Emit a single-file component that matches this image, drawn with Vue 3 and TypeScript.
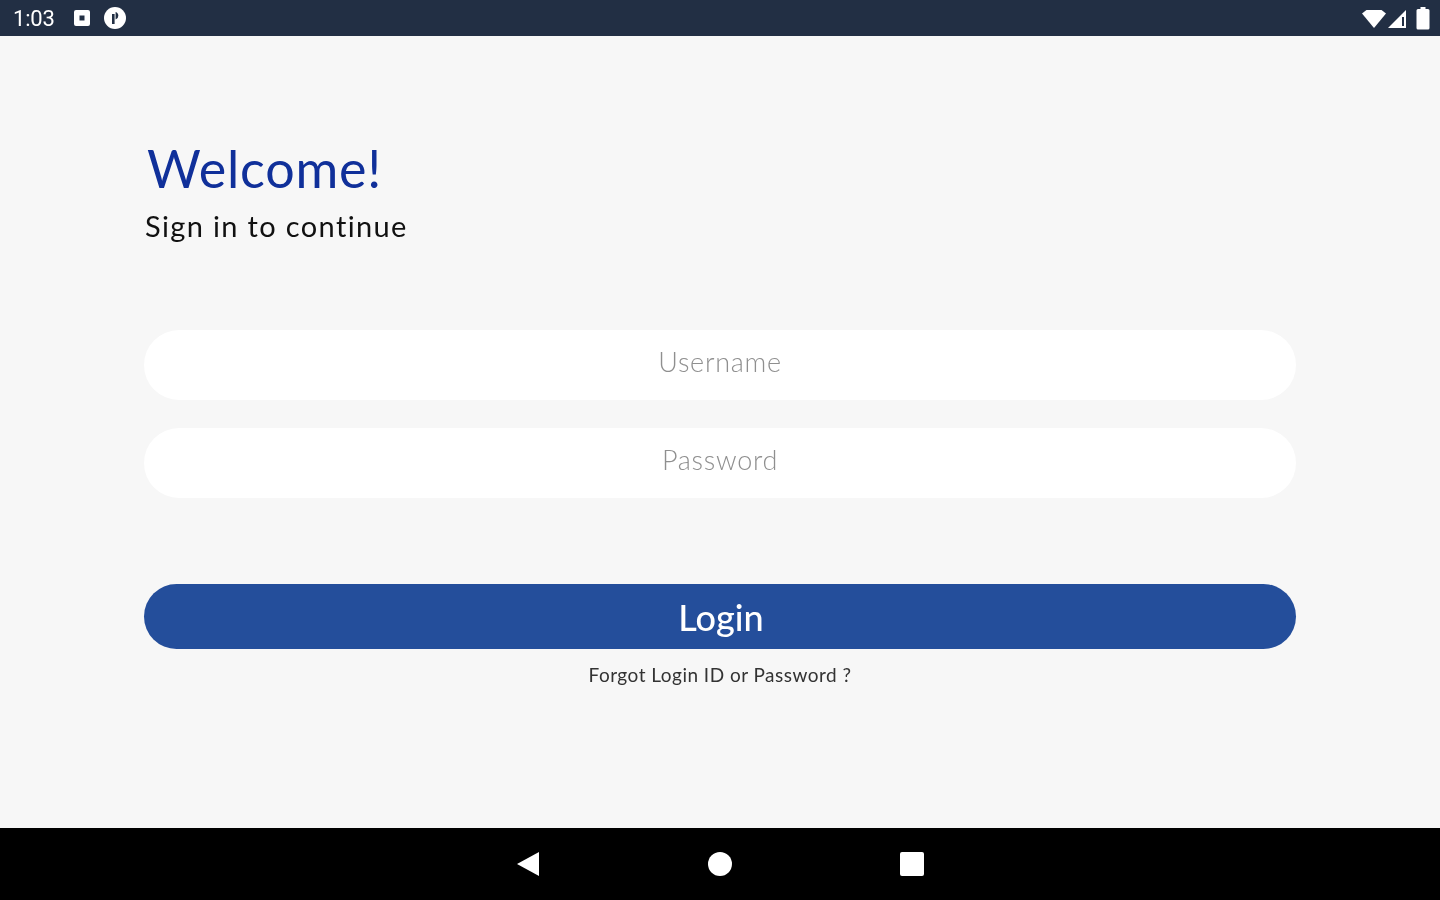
<script setup lang="ts">
import { ref } from 'vue';

const username = ref('');
const password = ref('');
</script>

<template>
  <div class="screen">
    <header class="status-bar">
      <div class="status-left">
        <span class="clock">1:03</span>
        <svg width="18" height="18" viewBox="0 0 18 18">
          <path fill="#fff" fill-rule="evenodd" d="M3 1h12a2 2 0 0 1 2 2v12a2 2 0 0 1-2 2H3a2 2 0 0 1-2-2V3a2 2 0 0 1 2-2zm3.500 5.500v5h5v-5z" />
        </svg>
        <svg width="24" height="24" viewBox="0 0 24 24">
          <circle cx="12" cy="12" r="11" fill="#fff" />
          <path fill="#222f44" d="M9 8h2.600v10H9zM12.600 6a4 4 0 0 1 0 7.600z" />
        </svg>
      </div>
      <div class="status-right">
        <svg width="26" height="22" viewBox="0 0 26 22">
          <path fill="#fff" d="M1 6.500 5.500 3h15L25 6.500 13 21z" />
        </svg>
        <svg width="20" height="22" viewBox="0 0 20 22">
          <path fill="#fff" fill-rule="evenodd" d="M19 3v18H1zM17 10h-2v9h2z" />
        </svg>
        <svg class="battery" width="14" height="24" viewBox="0 0 14 24">
          <path fill="#fff" d="M4.500 1h5v2H12a1.500 1.500 0 0 1 1.500 1.500V22a1.500 1.500 0 0 1-1.500 1.500H2A1.500 1.500 0 0 1 .5 22V4.500A1.500 1.500 0 0 1 2 3h2.500z" />
        </svg>
      </div>
    </header>

    <main class="content">
      <h1 class="title">Welcome!</h1>
      <p class="subtitle">Sign in to continue</p>

      <form class="login-form" @submit.prevent>
        <input v-model="username" class="field" type="text" placeholder="Username" />
        <input v-model="password" class="field" type="password" placeholder="Password" />
        <button class="login-btn" type="submit">Login</button>
      </form>
      <a class="forgot">Forgot Login ID or Password ?</a>
    </main>

    <footer class="nav-bar">
      <svg width="24" height="26" viewBox="0 0 24 26">
        <path fill="#fff" d="M23 1v24L1 13z" />
      </svg>
      <span class="nav-home"></span>
      <span class="nav-recent"></span>
    </footer>
  </div>
</template>

<style>
body {
  margin: 0;
}
</style>

<style scoped>
.screen {
  width: 1440px;
  height: 900px;
  display: flex;
  flex-direction: column;
  overflow: hidden;
  background: #f7f7f7;
  font-family: Lato, "Noto Sans", sans-serif;
  filter: blur(0.6px);
}
.status-bar {
  height: 36px;
  flex: none;
  display: flex;
  justify-content: space-between;
  align-items: center;
  padding: 0 10px 0 13px;
  background: #222f44;
  color: #fff;
}
.status-left,
.status-right {
  display: flex;
  align-items: center;
}
.status-left {
  gap: 12px;
}
.battery {
  margin-left: 9px;
}
.clock {
  width: 48px;
  font-family: Roboto, sans-serif;
  font-size: 22px;
  letter-spacing: -0.2px;
}
.content {
  flex: 1;
  display: flex;
  flex-direction: column;
  padding: 0 144px;
}
.title {
  margin: 102px 0 0 3px;
  font-size: 52px;
  line-height: 60px;
  font-weight: 400;
  letter-spacing: 0.8px;
  color: #10309a;
}
.subtitle {
  margin: 8px 0 0 1px;
  font-size: 29px;
  line-height: 40px;
  letter-spacing: 1.35px;
  color: #111;
}
.login-form {
  display: flex;
  flex-direction: column;
  margin-top: 84px;
}
.field {
  height: 70px;
  box-sizing: border-box;
  margin-bottom: 28px;
  padding: 0 0 7px;
  border: none;
  border-radius: 35px;
  outline: none;
  background: #fff;
  text-align: center;
  font-family: inherit;
  font-size: 27px;
  font-weight: 300;
  letter-spacing: 0.7px;
}
.field::placeholder {
  color: #8f8f8f;
  opacity: 1;
}
.login-btn {
  height: 65px;
  margin-top: 58px;
  padding: 0 0 0 2px;
  border: none;
  border-radius: 33px;
  background: #244e9b;
  color: #fff;
  font-family: inherit;
  font-size: 36px;
  font-weight: 500;
}
.forgot {
  margin-top: 13px;
  text-align: center;
  font-size: 19px;
  line-height: 26px;
  letter-spacing: 0.48px;
  color: #333;
}
.nav-bar {
  height: 72px;
  flex: none;
  display: flex;
  justify-content: center;
  align-items: center;
  gap: 168px;
  background: #000;
}
.nav-home {
  width: 24px;
  height: 24px;
  border-radius: 50%;
  background: #fff;
}
.nav-recent {
  width: 24px;
  height: 24px;
  border-radius: 2px;
  background: #fff;
}
</style>
